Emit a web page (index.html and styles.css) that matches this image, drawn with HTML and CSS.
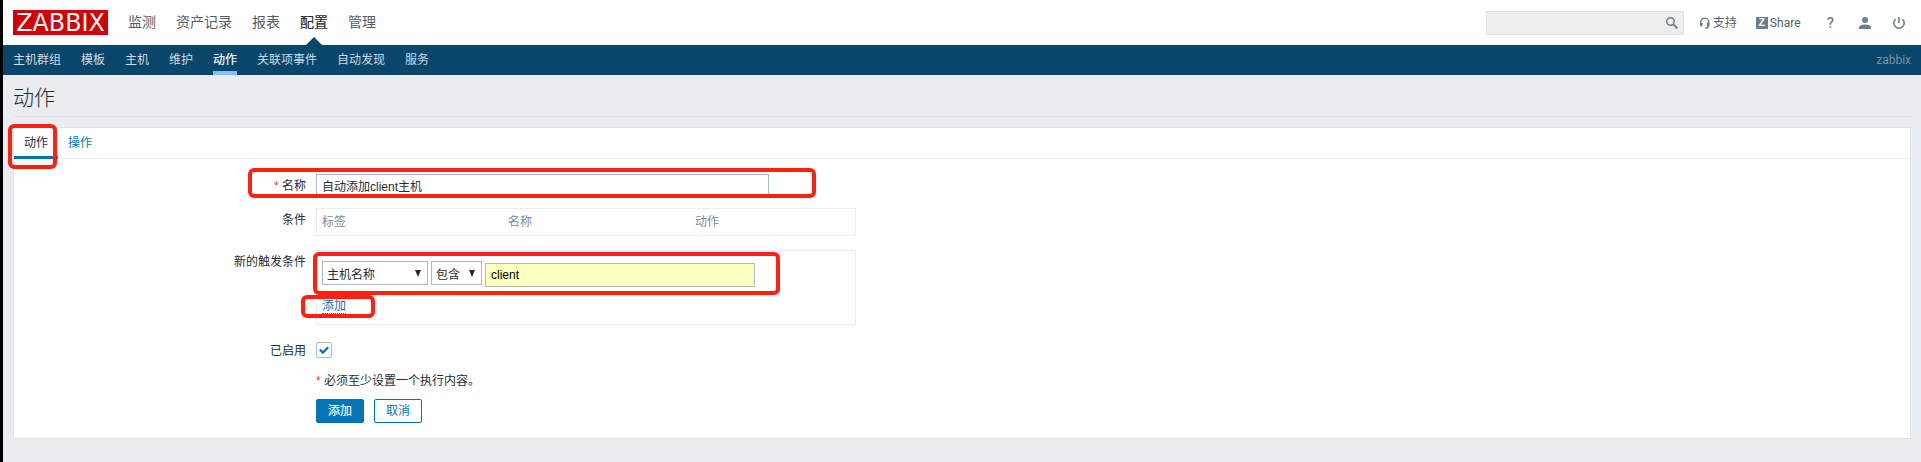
FILE: index.html
```html
<!DOCTYPE html>
<html lang="zh-CN">
<head>
<meta charset="utf-8">
<title>动作</title>
<link rel="stylesheet" href="styles.css">
</head>
<body>
<header class="top">
  <a class="logo"><span>ZABBIX</span></a>
  <nav class="menu">
    <a>监测</a><a>资产记录</a><a>报表</a><a class="current">配置</a><a>管理</a>
  </nav>
  <div class="tools">
    <div class="search">
      <svg width="12" height="12" viewBox="0 0 12 12"><circle cx="4.500" cy="4.500" r="3.700" fill="none" stroke="#6c7f8c" stroke-width="1.500"/><path d="M7.200 7.200L11.400 11.400" stroke="#6c7f8c" stroke-width="1.900"/></svg>
    </div>
    <a class="support"><svg width="12" height="12" viewBox="0 0 12 12"><path d="M1.700 7V5.100a4 4 0 0 1 8 0V8.500c0 1.700-1.200 2.700-3.500 2.700" fill="none" stroke="#6c7f8c" stroke-width="1.400"/><path d="M1 5.500h2.500v4H2.200Q1 9.300 1 8zM8 5.500h2.400V8.500L9.500 9.500H8z" fill="#6c7f8c"/></svg><span>支持</span></a>
    <a class="share"><i>Z</i><span>Share</span></a>
    <a class="help">?</a>
    <a class="user"><svg width="12" height="12" viewBox="0 0 12 12"><circle cx="6" cy="3" r="3" fill="#6c7f8c"/><path d="M0 12V10.500Q0 7.500 6 7.500T12 10.500V12z" fill="#6c7f8c"/></svg></a>
    <a class="power"><svg width="12" height="12" viewBox="0 0 12 12"><path d="M2.700 2A5.200 5.200 0 1 0 9.300 2" fill="none" stroke="#6c7f8c" stroke-width="1.500"/><path d="M6 0V6" stroke="#6c7f8c" stroke-width="1.600"/></svg></a>
  </div>
</header>
<nav class="sub">
  <a>主机群组</a><a>模板</a><a>主机</a><a>维护</a><a class="current">动作</a><a>关联项事件</a><a>自动发现</a><a>服务</a>
  <span class="server">zabbix</span>
</nav>
<main>
  <h1>动作</h1>
  <section class="panel">
    <div class="tabs"><a class="active">动作</a><a>操作</a><div class="mark mark-tab"></div></div>
    <div class="form">
      <div class="row row-name">
        <label><em>*</em> 名称</label>
        <div class="input name">自动添加client主机</div>
        <div class="mark mark-name"></div>
      </div>
      <div class="row row-cond">
        <label>条件</label>
        <div class="box conditions"><span>标签</span><span>名称</span><span>动作</span></div>
      </div>
      <div class="row row-new">
        <label>新的触发条件</label>
        <div class="box trigger">
          <div class="controls">
            <div class="select type">主机名称<svg width="6" height="7" viewBox="0 0 6 7"><path d="M0 0H6L3 7z"/></svg></div>
            <div class="select operator">包含<svg width="6" height="7" viewBox="0 0 6 7"><path d="M0 0H6L3 7z"/></svg></div>
            <div class="input value">client</div>
          </div>
          <a class="link">添加</a>
          <div class="mark mark-trigger"></div>
          <div class="mark mark-add"></div>
        </div>
      </div>
      <div class="row row-enabled">
        <label>已启用</label>
        <div class="check"><svg width="10" height="8" viewBox="0 0 10 8"><path d="M.8 3.600L3.900 6.500L9.200 1.200" fill="none" stroke="#0275b8" stroke-width="2.300"/></svg></div>
      </div>
      <p class="note"><em>*</em> 必须至少设置一个执行内容。</p>
      <div class="buttons"><button class="primary">添加</button><button>取消</button></div>
    </div>
  </section>
</main>
</body>
</html>
```

FILE: styles.css
```css
* { box-sizing: border-box; }
body {
  margin: 0;
  height: 462px;
  overflow: hidden;
  background: #e9edf0;
  border-left: 3px solid #000;
  font: 12px/16px "Liberation Sans", "Noto Sans CJK SC", sans-serif;
  color: #1f2c33;
  position: relative;
}
body::before {
  content: "";
  position: absolute;
  left: -3px;
  top: 0;
  width: 2px;
  height: 462px;
  background: #3b3b3f;
}
em { font-style: normal; color: #e33734; }
svg { display: block; }

.top {
  display: flex;
  align-items: center;
  height: 45px;
  padding: 0 16px 0 10px;
  background: #fff;
}
.logo {
  display: flex;
  align-items: center;
  justify-content: center;
  width: 95px;
  height: 25px;
  background: #d40000;
  color: #fff;
  font: 25px/25px "DejaVu Sans", sans-serif;
}
.logo span { transform: scaleX(.95); }
.menu {
  display: flex;
  gap: 20px;
  margin-left: 20px;
  height: 45px;
  font-size: 14px;
  line-height: 44px;
  color: #4f5f69;
}
.menu .current { position: relative; color: #1f2c33; -webkit-text-stroke: .15px; }
.menu .current::after {
  content: "";
  position: absolute;
  left: 6px;
  bottom: 0;
  border: 8px solid transparent;
  border-top: 0;
  border-bottom-color: #0a466a;
}
.tools { display: flex; align-items: center; height: 45px; margin-left: auto; color: #4f5f69; }
.search {
  display: flex;
  align-items: center;
  justify-content: flex-end;
  width: 198px;
  height: 24px;
  padding-right: 5px;
  background: #ededed;
  border: 1px solid #e2e2e2;
}
.support, .share { display: flex; align-items: center; gap: 2px; }
.support { margin-left: 15px; }
.share { margin-left: 19px; font-family: Roboto, sans-serif; }
.share i {
  width: 12px;
  height: 12px;
  background: #6c7f8c;
  color: #fff;
  font: bold 10px/12px "Liberation Sans", sans-serif;
  text-align: center;
}
.share span { width: 33px; letter-spacing: .1px; }
.help { margin-left: 24px; color: #6c7f8c; font: 500 15px/16px Roboto, sans-serif; }
.user { margin-left: 25px; }
.power { margin-left: 22px; }

.sub {
  display: flex;
  gap: 20px;
  height: 30px;
  padding: 0 10px;
  background: #0a466a;
  color: #d0dbe2;
  line-height: 30px;
}
.sub .current { color: #fff; border-bottom: 4px solid #7dc3f5; -webkit-text-stroke: .15px; }
.server { margin-left: auto; color: #7593a7; font-family: Roboto, sans-serif; line-height: 30px; }

main { padding: 0 10px; }
h1 {
  height: 42px;
  margin: 0 0 10px;
  border-bottom: 1px solid #dfe4e7;
  font-size: 21px;
  font-weight: 300;
  line-height: 45px;
}
.panel { height: 312px; background: #fff; border: 1px solid #dfe4e7; }
.tabs {
  position: relative;
  display: flex;
  height: 31px;
  border-bottom: 1px solid #ebeef0;
  line-height: 31px;
  color: #0275b8;
}
.tabs a { height: 31px; padding: 0 10px; }
.tabs .active { color: #1f2c33; border-bottom: 3px solid #0275b8; }

.row { position: relative; display: flex; }
label { width: 292px; margin-right: 10px; text-align: right; }
.input, .select { height: 24px; border: 1px solid #acbbc2; background: #fff; }
.row-name { padding-top: 15px; height: 49px; }
.row-name label { line-height: 25px; }
.name { width: 453px; padding-left: 5px; line-height: 25px; }
.box { position: relative; width: 540px; border: 1px solid #ebeef0; }
.row-cond { height: 42px; }
.row-cond label { line-height: 25px; }
.conditions {
  display: grid;
  grid-template-columns: 186px 187px 1fr;
  height: 28px;
  padding-left: 5px;
  color: #768d99;
  line-height: 27px;
}
.row-new { height: 92px; }
.row-new label { line-height: 25px; }
.trigger { height: 75px; padding: 10px 5px 0; }
.controls { display: flex; gap: 3px; }
.select { display: flex; justify-content: space-between; padding: 0 6px 0 4px; line-height: 26px; }
.select svg { margin-top: 8px; fill: #1f2c33; }
.type { width: 106px; }
.operator { width: 51px; }
.value { width: 270px; margin-top: 2px; padding-left: 5px; background: #faffbd; color: #000; line-height: 22px; }
.link { display: inline-block; margin-top: 11px; height: 16px; color: #0275b8; border-bottom: 1px dotted #0275b8; line-height: 17px; }
.row-enabled { height: 30px; }
.row-enabled label { line-height: 19px; }
.check {
  display: flex;
  align-items: center;
  justify-content: center;
  width: 16px;
  height: 16px;
  border: 1px solid #acbbc2;
  border-radius: 2px;
}
.note { margin: 0 0 0 302px; height: 27px; line-height: 19px; }
.buttons { display: flex; gap: 10px; margin-left: 302px; }
button {
  width: 48px;
  height: 24px;
  padding: 0;
  background: #fff;
  border: 1px solid #0275b8;
  border-radius: 2px;
  color: #0275b8;
  font: inherit;
  line-height: 23px;
}
.primary { background: #0275b8; color: #fff; -webkit-text-stroke: .15px; }

.mark { position: absolute; border: 4px solid #ff2013; border-radius: 6px; z-index: 2; }
.mark-tab { left: -6px; top: -4px; width: 49px; height: 45px; }
.mark-name { left: 234px; top: 9px; width: 568px; height: 30px; }
.mark-trigger { left: -4px; top: 1px; width: 467px; height: 43px; }
.mark-add { left: -16px; top: 44px; width: 74px; height: 23px; }
```
